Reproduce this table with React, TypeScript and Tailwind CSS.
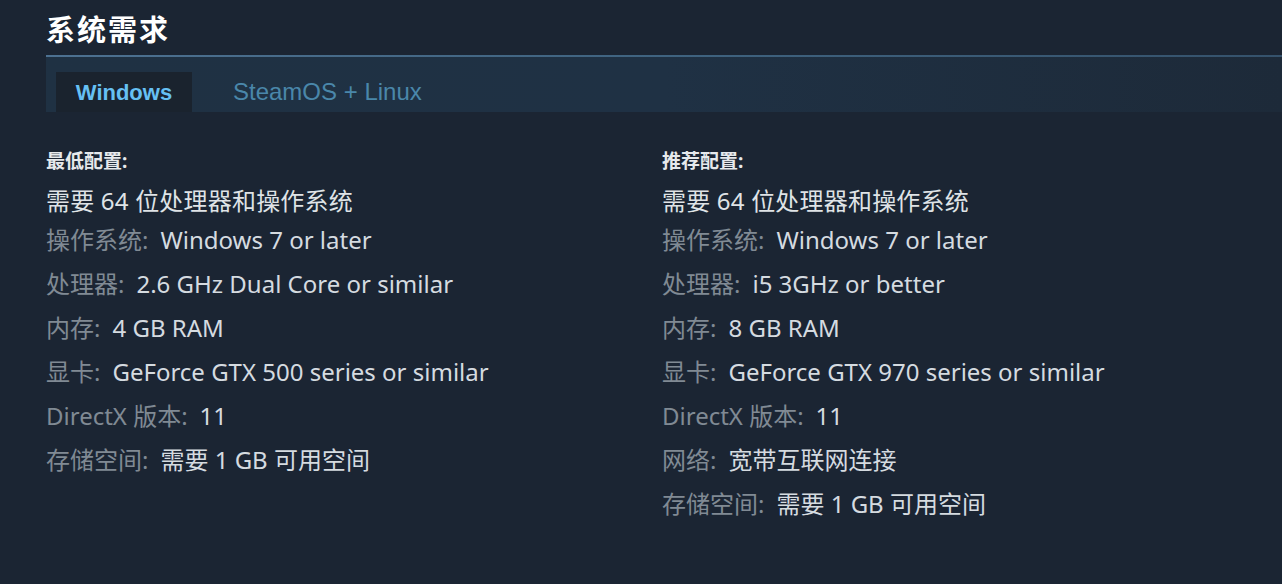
const minimum: [string, string][] = [
  ['操作系统:', 'Windows 7 or later'],
  ['处理器:', '2.6 GHz Dual Core or similar'],
  ['内存:', '4 GB RAM'],
  ['显卡:', 'GeForce GTX 500 series or similar'],
  ['DirectX 版本:', '11'],
  ['存储空间:', '需要 1 GB 可用空间'],
]

const recommended: [string, string][] = [
  ['操作系统:', 'Windows 7 or later'],
  ['处理器:', 'i5 3GHz or better'],
  ['内存:', '8 GB RAM'],
  ['显卡:', 'GeForce GTX 970 series or similar'],
  ['DirectX 版本:', '11'],
  ['网络:', '宽带互联网连接'],
  ['存储空间:', '需要 1 GB 可用空间'],
]

function SpecColumn({ title, rows }: { title: string; rows: [string, string][] }) {
  return (
    <div>
      <div className="h-[26px] text-[19px] font-bold leading-[26px] text-[#e6e9ec]">{title}</div>
      <div className="mt-[7px] h-[40px] leading-[40px] tracking-[0.2px] text-[#dfe3e6]">需要 64 位处理器和操作系统</div>
      {rows.map(([label, value], i) => (
        <div key={i} className={`h-[44px] leading-[44px] ${i === 0 ? 'mt-[-3px]' : ''}`}>
          <span className="text-[#808a94]">{label}</span>
          <span className="ml-[12px] text-[#d5dbe0]">{value}</span>
        </div>
      ))}
    </div>
  )
}

export default function App() {
  return (
    <div
      className="h-[584px] w-[1282px] overflow-hidden bg-[#1b2533] text-[24px]"
      style={{ fontFamily: '"Noto Sans", "Noto Sans CJK SC", sans-serif' }}
    >
      <div className="pl-[46px]">
        <h2 className="h-[55px] pt-[12px] text-[29px] font-bold leading-[36px] tracking-[2px] text-white">
          系统需求
        </h2>
        <div className="h-[2px] bg-gradient-to-r from-[#4d7191] via-[#3f6380] to-[#35526c]" />
        <div
          className="flex h-[55px] items-end bg-gradient-to-r from-[#1f3143] via-[#1f3144] to-[#1d2a39] pl-[10px]"
          style={{ fontFamily: '"Liberation Sans", Arial, sans-serif' }}
        >
          <div className="flex h-[40px] w-[136px] items-center justify-center bg-[#1a232e] text-[22px] font-bold text-[#66c0f4]">
            Windows
          </div>
          <div className="flex h-[40px] items-center pl-[41px] text-[24px] text-[#4a87aa]">SteamOS + Linux</div>
        </div>
        <div className="mt-[36px] grid grid-cols-[616px_1fr]">
          <SpecColumn title="最低配置:" rows={minimum} />
          <SpecColumn title="推荐配置:" rows={recommended} />
        </div>
      </div>
    </div>
  )
}
